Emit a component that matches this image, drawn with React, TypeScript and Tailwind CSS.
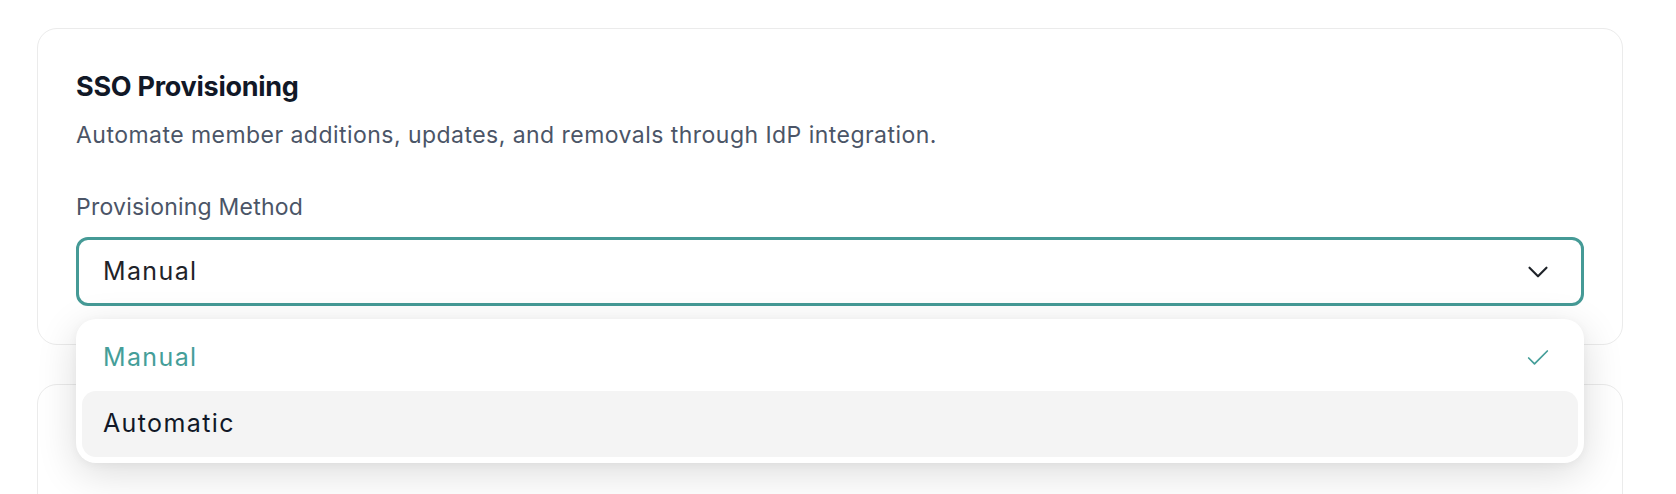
import { useState } from "react";

function ChevronDown() {
  return (
    <svg width="34" height="34" viewBox="0 0 24 24" fill="none" stroke="currentColor" strokeWidth="1.5" strokeLinecap="round" strokeLinejoin="round">
      <path d="m6 9 6 6 6-6" />
    </svg>
  );
}

function Check() {
  return (
    <svg width="28" height="28" viewBox="0 0 24 24" fill="none" stroke="currentColor" strokeWidth="1.5" strokeLinecap="round" strokeLinejoin="round">
      <path d="M20 6 9 17l-5-5" />
    </svg>
  );
}

const options = ["Manual", "Automatic"];

export default function App() {
  const [value, setValue] = useState("Manual");
  const [hovered, setHovered] = useState("Automatic");

  return (
    <div className="min-h-[494px] bg-white pt-[28px] pl-[37px] pr-[53px] font-['Inter',sans-serif]">
      {/* SSO provisioning card */}
      <div className="rounded-[20px] border border-[#ebebeb] bg-white p-[38px]">
        <h2 className="text-[27px] leading-[40px] font-bold tracking-[-0.01em] text-[#111827]">SSO Provisioning</h2>
        <p className="mt-[12px] text-[23px] leading-[32px] tracking-[0.02em] text-[#4b5567]">
          Automate member additions, updates, and removals through IdP integration.
        </p>

        <label className="mt-[40px] block text-[23px] leading-[32px] tracking-[0.01em] text-[#4b5567]">Provisioning Method</label>
        <div className="relative mt-[14px]">
          <button className="flex h-[69px] w-full items-center justify-between rounded-[12px] border-[3px] border-[#459a96] bg-white pr-[26px] pl-[24px] text-left text-[25px] tracking-[0.055em] text-[#1f2329]">
            <span>{value}</span>
            <span className="text-[#1f2329]">
              <ChevronDown />
            </span>
          </button>

          {/* Open dropdown */}
          <div className="absolute top-full right-0 left-0 z-10 mt-[13px] rounded-[20px] bg-white p-[6px] shadow-[0_10px_40px_rgba(0,0,0,0.14),0_2px_10px_rgba(0,0,0,0.04)]">
            {options.map((opt) => (
              <div
                key={opt}
                onMouseEnter={() => setHovered(opt)}
                onClick={() => setValue(opt)}
                className={`flex h-[66px] cursor-pointer items-center justify-between rounded-[14px] pr-[26px] pl-[21px] text-[25px] tracking-[0.055em] ${
                  hovered === opt ? "bg-[#f4f4f4]" : ""
                } ${value === opt ? "text-[#459e99]" : "text-[#111827]"}`}
              >
                <span>{opt}</span>
                {value === opt && (
                  <span className="text-[#459e99]">
                    <Check />
                  </span>
                )}
              </div>
            ))}
          </div>
        </div>
      </div>

      {/* Next card, cut off below */}
      <div className="mt-[39px] h-[200px] rounded-[20px] border border-[#ebebeb] bg-white" />
    </div>
  );
}
